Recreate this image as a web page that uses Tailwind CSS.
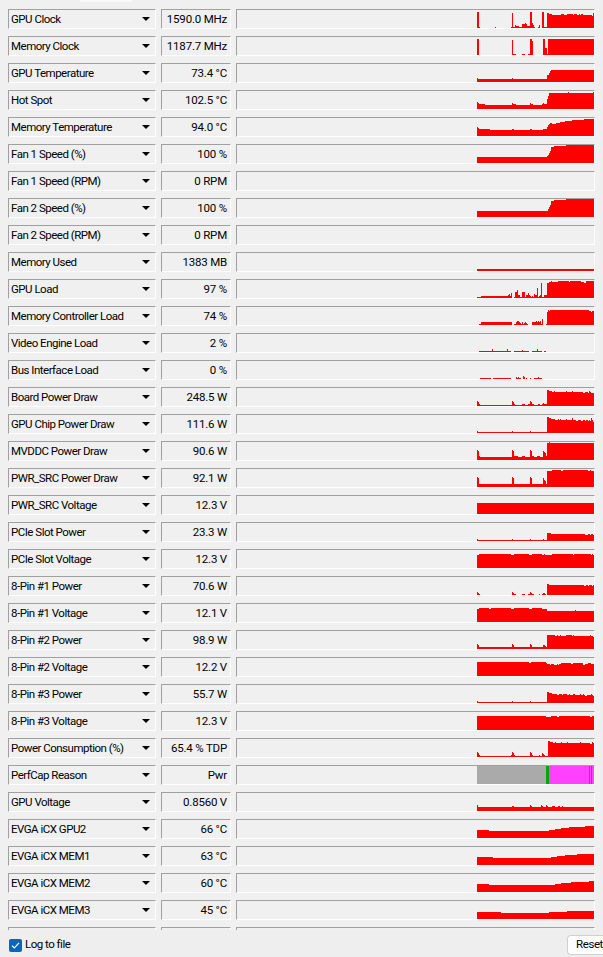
<!DOCTYPE html>
<html lang="en">
<head>
    <meta charset="UTF-8">
    <title>GPU-Z Sensors</title>
    <script src="https://cdn.jsdelivr.net/npm/@tailwindcss/browser@4"></script>
</head>
<body class="bg-[#eeeeee] h-[957px] w-[603px] overflow-hidden font-['Roboto',Arial,sans-serif] text-[11.5px] tracking-[-0.2px] text-black">

<!-- Sensor panel -->
<div class="w-[600px] h-[930px] bg-[#f0f0f0] overflow-hidden">
    <div class="ml-[80px] w-[52px] h-[2px] bg-[#f9f9f9]"></div>
    <div id="rows" class="pt-[7px] pl-[8px]"></div>
</div>

<!-- Bottom bar -->
<div class="flex items-center justify-between h-[27px] pt-[3px] pl-[9px]">
    <label class="flex items-center gap-[3px]">
        <span class="flex items-center justify-center w-[13px] h-[13px] rounded-[2px] bg-[#0067c0]">
            <svg width="9" height="9" viewBox="0 0 9 9" fill="none" stroke="white" stroke-width="1.2"><path d="M1 4.8 L3.4 7 L8 1.8"/></svg>
        </span>
        <span class="tracking-[-0.5px]">Log to file</span>
    </label>
    <button class="w-[36px] h-[20px] pl-[8px] text-left tracking-[-0.4px] bg-[#fdfdfd] border border-r-0 border-[#d0d0d0] rounded-l-[4px]">Reset</button>
</div>

<script>
    // each graph: run-length heights, "hxN" = height h for N columns (117 columns wide)
    const sensors = [
        ['GPU Clock', '1590.0 MHz', '16x2 1 0x15 1 0x15 1 15 1x2 3 2x3 1x3 4x3 5 4 2x3 16x2 5 3 1 0x3 1 3 0x2 16x2 1x3 15x2 14x3 13x9 14x3 13x3 14x6 13 14x3 13x2 14 13 14x2 13x9 12 15 14 11'],
        ['Memory Clock', '1187.7 MHz', '16x2 0x33 15 1x3 0x6 1x3 0x3 1x2 16x2 14 0x10 16x2 7x2 1 16x47'],
        ['GPU Temperature', '73.4 °C', '4 3x34 4 3x34 7x2 9 11 12x44'],
        ['Hot Spot', '102.5 °C', '7 6 5x6 4x27 6 5x3 4x14 6 5x2 4x9 5 6 5x3 10 13 16x19 17 16x24 17 16x2'],
        ['Memory Temperature', '94.0 °C', '9 8 7x11 6x22 7x2 6x16 7x2 6x11 7x4 9 11 12 13x2 12x4 13x4 14x5 15x7 16x12 17x24'],
        ['Fan 1 Speed (%)', '100 %', '6x70 7 8 10 12 16x3 17x12 18x28'],
        ['Fan 1 Speed (RPM)', '0 RPM', ''],
        ['Fan 2 Speed (%)', '100 %', '6x71 8 10 12 16x3 17x12 18x28'],
        ['Fan 2 Speed (RPM)', '0 RPM', ''],
        ['Memory Used', '1383 MB', '2x117'],
        ['GPU Load', '97 %', '1x4 2x27 3 4 2 5 0x2 1 6x2 8 3x2 1x2 6x3 1 3x2 5 3 2 1 2 1 4 3x2 10 1 2 3 15 1x2 3x3 15x2 16x2 17 16x6 17x11 16 17x11 16x3 15x2 17x3'],
        ['Memory Controller Load', '74 %', '0x2 1x2 3x31 0x2 1x2 3 4x2 3 2 1 3 1 2 3 2 1 0x4 3x4 4 3 4 3 4 1 6 0x3 1 13 15 14 15x39 14x2 13 14x2'],
        ['Video Engine Load', '2 %', '0x2 1x13 3 1x14 3 1x3 0x3 1x8 2 1x6 0x3 1x5 3 1x4 0x2 1x2 0x48'],
        ['Bus Interface Load', '0 %', '0x3 1x11 0x2 1x18 0x5 2 1 2 1x2 0x2 3 2 0 1 0x3 1 0x3 1x4 2 1x3 0x52'],
        ['Board Power Draw', '248.5 W', '5 4 2 1x32 5 4 2 1x7 2x3 1x3 2x2 5 4 2x2 1x4 2x2 1x2 2 3 2x3 16x2 15x3 14x2 15 14x11 15 14x5 15 14x10 13x2 14x3 13 15 14 13'],
        ['GPU Chip Power Draw', '111.6 W', '2 1x34 2 1x17 2 1x16 16x2 15x2 14x4 13x3 14 13 14 13x5 14 13x5 15 13x3 12x2 13x3 12x2 13x2 12 13x2 12 13 12 15 13 11x2'],
        ['MVDDC Power Draw', '90.6 W', '10 9 4 3x32 10 9 4x4 3x4 4x3 3x5 10 9 4x2 3x3 4x3 3x3 9 8 7 4 17x2 18 17x44'],
        ['PWR_SRC Power Draw', '92.1 W', '10 9 3x33 10 9 3x16 10 9 3x11 9 7 6 3 16x5 17x9 16x2 17x25 16x2 17 16x2'],
        ['PWR_SRC Voltage', '12.3 V', '11x117'],
        ['PCIe Slot Power', '23.3 W', '2 1x34 2 1x17 2 1x12 2 1x3 8x4 7x34 6x3 7x2 6 7x2 6 7x2'],
        ['PCIe Slot Voltage', '12.3 V', '13x2 14x32 13x3 14x15 13x3 14x10 13x2 14 13x7 14x21 13 14x17 13 14 13'],
        ['8-Pin #1 Power', '70.6 W', '3 2 1 0x32 3 2 1x2 0x6 1x3 0x3 1x2 3 2 1x2 0x5 1 0x2 1 2x2 1 0 11x2 10x35 9x2 10x2 9 10x3 9 10x2'],
        ['8-Pin #1 Voltage', '12.1 V', '13x2 14x10 13x2 14x20 13x3 14x15 13x3 14x10 13x5 11x28 12 11x18'],
        ['8-Pin #2 Power', '98.9 W', '5 4 2x33 5 4 2x16 5 4 2x11 4x2 3 2 14x8 13x2 14 13x2 14 13x5 14x6 13 14 13x16 14 13x2 12'],
        ['8-Pin #2 Voltage', '12.2 V', '14x52 13x2 14x15 13 12x3 11 12x3 11x3 12 11 12x2 13x10 12x2 13x10 11x2 12x3 13x3 12x3'],
        ['8-Pin #3 Power', '55.7 W', '2 1x34 2 1x17 2 1x16 11x2 10x3 9x5 8x2 9x3 8 9x4 8x2 9 8x3 9x2 8x5 9 8x2 9 8 7x2 8x4 9 8 7'],
        ['8-Pin #3 Voltage', '12.3 V', '14x69 13x5 14x6 13x2 14x31 13x2 14x2'],
        ['Power Consumption (%)', '65.4 % TDP', '5 4 2 1x31 2 5 4 2 1x15 5 4 2 1x6 2 1x2 4 3 2 1x3 16x2 15x3 14x2 15 14x5 15 14x5 15 14x12 15 14x9 13x2 15 14x2'],
        ['PerfCap Reason', 'Pwr', 'perf'],
        ['GPU Voltage', '0.8560 V', '6 4x34 5x2 4x16 6 5 4x9 6 5 4x3 6 5 4x4 5x3 4x3 5x2 4x2 5 4x32 3 4x2 3 4 3 4 3'],
        ['EVGA iCX GPU2', '66 °C', '8x12 7x60 8x6 9x6 10x8 11x16 12x9'],
        ['EVGA iCX MEM1', '63 °C', '8x16 7x58 8x6 9x8 10x12 11x17'],
        ['EVGA iCX MEM2', '60 °C', '8x12 7x66 8x6 9x10 10x18 11x5'],
        ['EVGA iCX MEM3', '45 °C', '7x24 6x48 7x18 8x27'],
        ['', '', '']
    ];

    function graphSvg(data) {
        if (data === 'perf') {
            return '<svg width="117" height="18" class="block" shape-rendering="crispEdges">'
                + '<rect width="69" height="18" fill="#aaaaaa"/><rect x="69" width="3" height="18" fill="#00aa00"/>'
                + '<rect x="72" width="45" height="18" fill="#ff40ff"/><rect x="112" width="1" height="18" fill="#00aa00"/>'
                + '<rect x="114" width="1" height="18" fill="#00aa00"/></svg>';
        }
        let x = 0, last = 0, rects = '';
        data.split(' ').filter(Boolean).forEach(tok => {
            const [h, n] = tok.split('x').map(Number);
            const count = n || 1;
            if (h > 0) rects += `<rect x="${x}" y="${18 - h}" width="${count}" height="${h}"/>`;
            x += count;
            last = h;
        });
        // short strings: carry the last height to the right edge
        if (x < 117 && last > 0) rects += `<rect x="${x}" y="${18 - last}" width="${117 - x}" height="${last}"/>`;
        return `<svg width="117" height="18" fill="#ff0000" class="block" shape-rendering="crispEdges">${rects}</svg>`;
    }

    const boxClass = 'h-[20px] bg-[#f0f0f0] border border-t-[#a0a0a0] border-l-[#a0a0a0] border-r-white border-b-white';
    const rows = document.getElementById('rows');
    sensors.forEach(([name, value, data]) => {
        const row = document.createElement('div');
        row.className = 'flex gap-[5px] mb-[7px]';
        row.innerHTML = `
            <div class="${boxClass} w-[148px] flex items-center justify-between pl-[2px] pr-[5px]">
                <span class="pt-[1px] tracking-[-0.5px]">${name}</span>
                <span class="w-0 h-0 border-x-[4px] border-x-transparent border-t-[4px] border-t-black"></span>
            </div>
            <div class="${boxClass} w-[70px] flex items-center justify-end pt-[1px] pr-[3px] whitespace-nowrap">${value}</div>
            <div class="${boxClass} w-[359px] flex items-end justify-end">${graphSvg(data)}</div>`;
        rows.appendChild(row);
    });
</script>
</body>
</html>
